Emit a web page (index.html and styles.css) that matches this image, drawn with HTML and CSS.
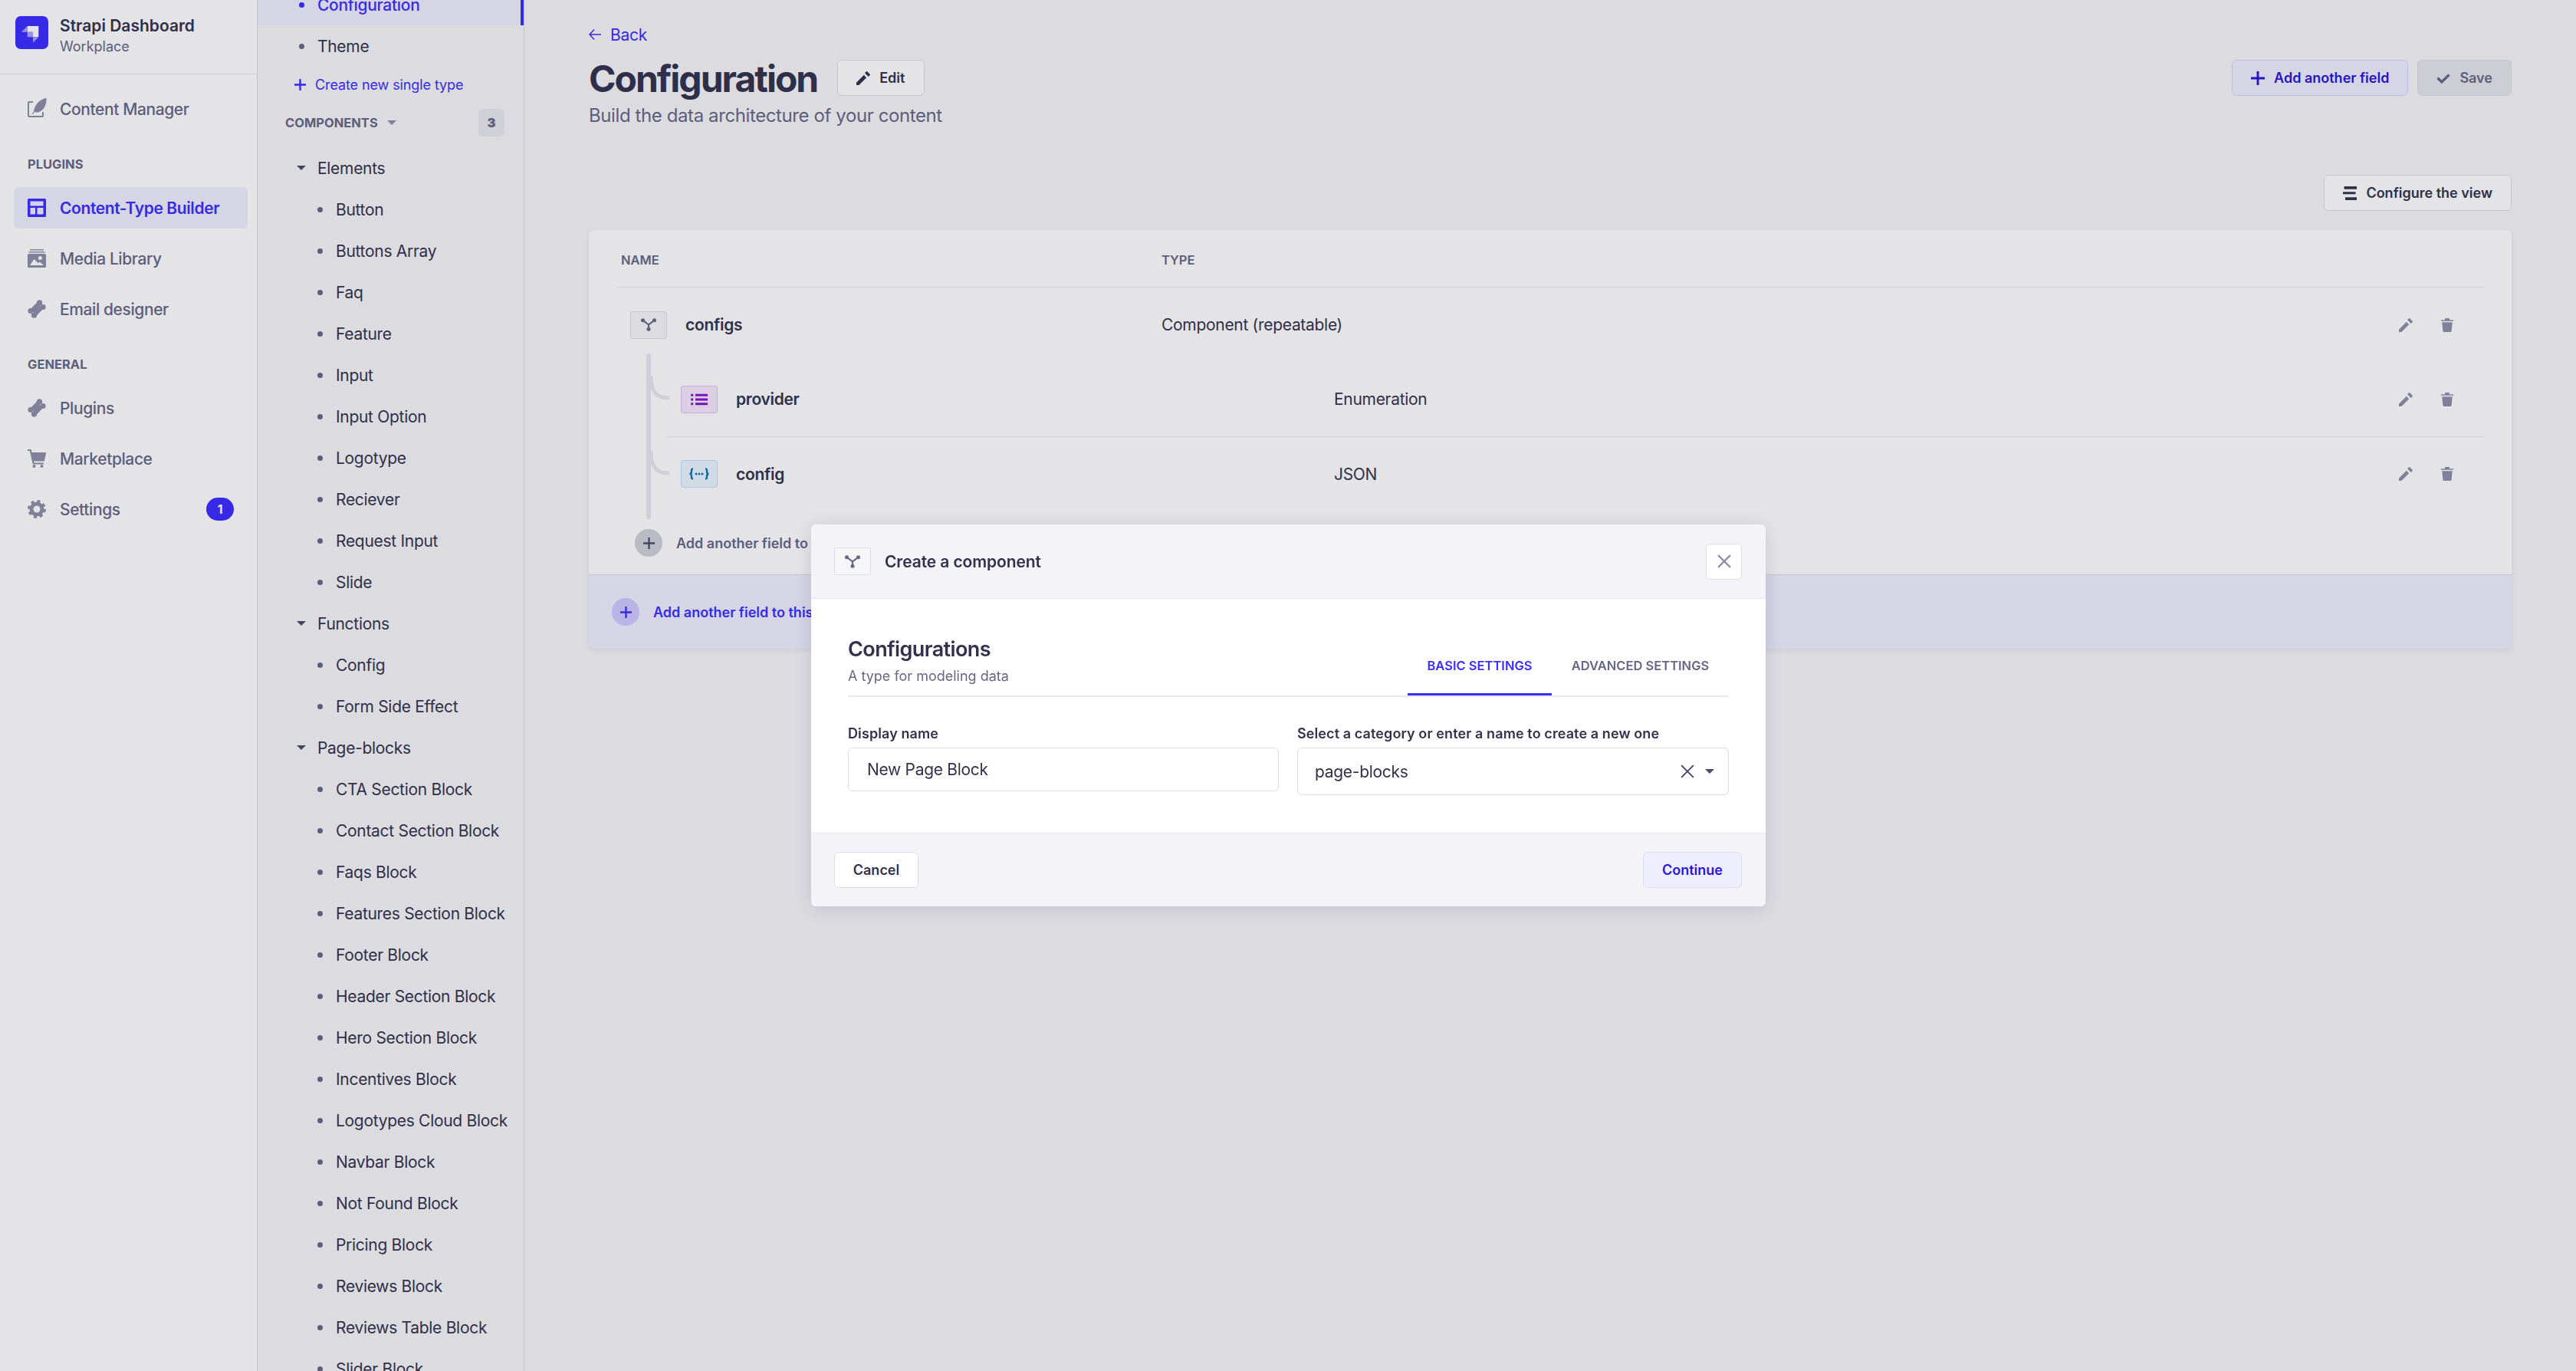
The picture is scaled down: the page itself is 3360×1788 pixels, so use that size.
FILE: index.html
```html
<!DOCTYPE html>
<html lang="en">
<head>
    <meta charset="UTF-8">
    <meta name="viewport" content="width=device-width, initial-scale=1.0">
    <title>Strapi Dashboard</title>
    <link rel="stylesheet" href="styles.css">
</head>
<body>
    <svg class="defs" width="0" height="0">
        <defs>
            <symbol id="i-plus" viewBox="0 0 24 24"><path d="M24 13.6a.3.3 0 0 1-.3.3h-9.8v9.8a.3.3 0 0 1-.3.3h-3.2a.3.3 0 0 1-.3-.3v-9.8H.3a.3.3 0 0 1-.3-.3v-3.2a.3.3 0 0 1 .3-.3h9.8V.3a.3.3 0 0 1 .3-.3h3.2a.3.3 0 0 1 .3.3v9.8h9.8a.3.3 0 0 1 .3.3z"/></symbol>
            <symbol id="i-pencil" viewBox="0 0 24 24"><path d="M0 19.5V24h4.5L17.6 10.9l-4.5-4.5L0 19.5zM23.6 5l-4.6-4.6a1.2 1.2 0 0 0-1.7 0l-2.6 2.6 6.3 6.3 2.6-2.6a1.2 1.2 0 0 0 0-1.7z"/></symbol>
            <symbol id="i-trash" viewBox="1 0 22 24"><path d="M3 7h18l-1.6 15.6a1.5 1.5 0 0 1-1.5 1.4H6.1a1.5 1.5 0 0 1-1.5-1.4L3 7zM1.5 3H8V1.2C8 .5 8.5 0 9.2 0h5.6c.7 0 1.2.5 1.2 1.2V3h6.5c.3 0 .5.2.5.5v1c0 .3-.2.5-.5.5h-21a.5.5 0 0 1-.5-.5v-1c0-.3.2-.5.5-.5z"/></symbol>
            <symbol id="i-comp" viewBox="0 0 24 20"><path d="M3 3l9 7 9-7M12 10v7" fill="none" stroke="currentColor" stroke-width="2.6"/><circle cx="3" cy="3" r="3"/><circle cx="21" cy="3" r="3"/><circle cx="12" cy="17" r="3"/></symbol>
            <symbol id="i-puzzle" viewBox="0 0 24 24"><rect x="6.2" y="6.200" width="11.600" height="11.600" rx="1.500" transform="rotate(45 12 12)"/><circle cx="15.500" cy="4" r="3.700"/><circle cx="20.200" cy="9.500" r="3.400"/><circle cx="8.500" cy="20" r="3.700"/><circle cx="3.800" cy="14.500" r="3.400"/></symbol>
        </defs>
    </svg>

    <aside class="sidebar">
        <div class="brand">
            <svg class="brand-logo" viewBox="0 0 43 43">
                <rect width="43" height="43" rx="7" fill="#3b2cff"/>
                <path d="M15.7 13H30.3V27.3H23V20.7H15.7z" fill="#fff"/>
                <path d="M15.7 20.7H23V27.3H15.7z" fill="#a9a3ff"/>
                <path d="M8 20.7 15.7 13V20.7zM23 27.3H30.3L23 34.7z" fill="#a9a3ff"/>
            </svg>
            <div>
                <div class="brand-name">Strapi Dashboard</div>
                <div class="brand-sub">Workplace</div>
            </div>
        </div>
        <nav class="nav">
            <a class="nav-item">
                <svg class="nav-icon" viewBox="0 0 24 24"><path d="M7 3H2a1 1 0 0 0-1 1v17a1 1 0 0 0 1 1h17a1 1 0 0 0 1-1v-5" fill="none" stroke="currentColor" stroke-width="2"/><path d="M5.500 18.500 8 15.500C9 7 15 0 24.500-2.500 25 6 22 12 17 15c-3 1.700-5.500 2-8 1l-2 3z"/></svg>
                <span>Content Manager</span>
            </a>
            <div class="nav-heading nav-heading-plugins">PLUGINS</div>
            <a class="nav-item is-active">
                <svg class="nav-icon" viewBox="0 0 24 24"><path fill-rule="evenodd" d="M1.500 0h21A1.500 1.500 0 0 1 24 1.500v21a1.500 1.500 0 0 1-1.500 1.500h-21A1.500 1.500 0 0 1 0 22.500v-21A1.500 1.500 0 0 1 1.500 0zM3.500 3.500v6h17v-6zM3.500 12v8.500h6.500V12zM12.500 12v8.500h8V12z"/></svg>
                <span>Content-Type Builder</span>
            </a>
            <a class="nav-item">
                <svg class="nav-icon" viewBox="0 0 24 24"><path fill-rule="evenodd" d="M3 0h18v1.500H3zM1.500 3h21v1.500h-21zM1.500 6h21A1.500 1.500 0 0 1 24 7.500v15a1.500 1.500 0 0 1-1.500 1.500h-21A1.500 1.500 0 0 1 0 22.500v-15A1.500 1.500 0 0 1 1.500 6zM16.500 9a2.500 2.500 0 1 0 0 5 2.500 2.500 0 0 0 0-5zM3 21h18l-5-4.500-2.500 1.500-5-5z"/></svg>
                <span>Media Library</span>
            </a>
            <a class="nav-item">
                <svg class="nav-icon"><use href="#i-puzzle"/></svg>
                <span>Email designer</span>
            </a>
            <div class="nav-heading nav-heading-general">GENERAL</div>
            <a class="nav-item">
                <svg class="nav-icon"><use href="#i-puzzle"/></svg>
                <span>Plugins</span>
            </a>
            <a class="nav-item">
                <svg class="nav-icon" viewBox="0 0 24 24"><path d="M0 0h3.600c.6 0 1 .3 1.200.9L5.500 4H23c.7 0 1.100.6 1 1.200l-2 9.300c-.1.500-.6.900-1.100.9H8l.4 2H21v2.100H6.700L2.900 2.100H0z"/><circle cx="8.500" cy="22" r="2"/><circle cx="18.500" cy="22" r="2"/></svg>
                <span>Marketplace</span>
            </a>
            <a class="nav-item">
                <svg class="nav-icon" viewBox="0 0 24 24"><circle cx="12" cy="12" r="7" fill="none" stroke="currentColor" stroke-width="5"/><circle cx="12" cy="12" r="10.300" fill="none" stroke="currentColor" stroke-width="3.400" stroke-dasharray="4.100 4"/></svg>
                <span>Settings</span>
                <b class="nav-badge">1</b>
            </a>
        </nav>
    </aside>

    <aside class="subnav">
        <ul class="tree">
            <li class="tree-row is-current"><i class="dot"></i>Configuration</li>
            <li class="tree-row"><i class="dot"></i>Theme</li>
        </ul>
        <a class="create-link"><svg class="create-plus"><use href="#i-plus"/></svg>Create new single type</a>
        <div class="sub-heading">
            <span>COMPONENTS</span>
            <i class="caret"></i>
            <b class="count">3</b>
        </div>
        <ul class="tree">
            <li class="tree-row is-group"><i class="caret caret-dark"></i>Elements</li>
            <li class="tree-row is-child"><i class="dot"></i>Button</li>
            <li class="tree-row is-child"><i class="dot"></i>Buttons Array</li>
            <li class="tree-row is-child"><i class="dot"></i>Faq</li>
            <li class="tree-row is-child"><i class="dot"></i>Feature</li>
            <li class="tree-row is-child"><i class="dot"></i>Input</li>
            <li class="tree-row is-child"><i class="dot"></i>Input Option</li>
            <li class="tree-row is-child"><i class="dot"></i>Logotype</li>
            <li class="tree-row is-child"><i class="dot"></i>Reciever</li>
            <li class="tree-row is-child"><i class="dot"></i>Request Input</li>
            <li class="tree-row is-child"><i class="dot"></i>Slide</li>
            <li class="tree-row is-group"><i class="caret caret-dark"></i>Functions</li>
            <li class="tree-row is-child"><i class="dot"></i>Config</li>
            <li class="tree-row is-child"><i class="dot"></i>Form Side Effect</li>
            <li class="tree-row is-group"><i class="caret caret-dark"></i>Page-blocks</li>
            <li class="tree-row is-child"><i class="dot"></i>CTA Section Block</li>
            <li class="tree-row is-child"><i class="dot"></i>Contact Section Block</li>
            <li class="tree-row is-child"><i class="dot"></i>Faqs Block</li>
            <li class="tree-row is-child"><i class="dot"></i>Features Section Block</li>
            <li class="tree-row is-child"><i class="dot"></i>Footer Block</li>
            <li class="tree-row is-child"><i class="dot"></i>Header Section Block</li>
            <li class="tree-row is-child"><i class="dot"></i>Hero Section Block</li>
            <li class="tree-row is-child"><i class="dot"></i>Incentives Block</li>
            <li class="tree-row is-child"><i class="dot"></i>Logotypes Cloud Block</li>
            <li class="tree-row is-child"><i class="dot"></i>Navbar Block</li>
            <li class="tree-row is-child"><i class="dot"></i>Not Found Block</li>
            <li class="tree-row is-child"><i class="dot"></i>Pricing Block</li>
            <li class="tree-row is-child"><i class="dot"></i>Reviews Block</li>
            <li class="tree-row is-child"><i class="dot"></i>Reviews Table Block</li>
            <li class="tree-row is-child"><i class="dot"></i>Slider Block</li>
        </ul>
    </aside>

    <main class="main">
        <a class="back">
            <svg class="back-arrow" viewBox="0 0 16 16"><path d="M7 1.500 1 8l6 6.500M1.300 8H16" fill="none" stroke="currentColor" stroke-width="1.500"/></svg>
            Back
        </a>
        <div class="page-head">
            <div class="title-line">
                <h1>Configuration</h1>
                <button class="btn btn-edit"><svg class="btn-icon"><use href="#i-pencil"/></svg>Edit</button>
            </div>
            <div class="head-actions">
                <button class="btn btn-add"><svg class="btn-icon"><use href="#i-plus"/></svg>Add another field</button>
                <button class="btn btn-save">
                    <svg class="btn-icon" viewBox="0 0 24 24"><path d="M2 11.500 9 18.500 22 6" fill="none" stroke="currentColor" stroke-width="4.500"/></svg>
                    Save
                </button>
            </div>
        </div>
        <p class="subtitle">Build the data architecture of your content</p>
        <div class="view-bar">
            <button class="btn btn-view">
                <svg class="btn-icon" viewBox="0 0 24 24"><path d="M2 0h22v5H2zM0 9.500h22v4H0zM4 19h20v5H4z"/></svg>
                Configure the view
            </button>
        </div>

        <section class="panel">
            <div class="panel-body">
                <div class="col-head">
                    <span class="col-name">NAME</span>
                    <span>TYPE</span>
                </div>
                <div class="field">
                    <span class="type-box"><svg class="type-icon"><use href="#i-comp"/></svg></span>
                    <span class="field-name">configs</span>
                    <span class="field-type">Component (repeatable)</span>
                    <span class="field-actions">
                        <svg class="act"><use href="#i-pencil"/></svg>
                        <svg class="act"><use href="#i-trash"/></svg>
                    </span>
                </div>
                <div class="nested">
                    <div class="nested-line"></div>
                    <div class="field field-sub">
                        <svg class="curve" viewBox="0 0 28 36"><path d="M3 0c0 16 4 29 22 29" fill="none" stroke="#e7e7ee" stroke-width="5" stroke-linecap="round"/></svg>
                        <span class="type-box type-enum">
                            <svg class="type-icon" viewBox="0 0 22 16"><path d="M6 .8h16v3H6zM6 6.500h16v3H6zM6 12.200h16v3H6z"/><circle cx="1.700" cy="2.300" r="1.700"/><circle cx="1.700" cy="8" r="1.700"/><circle cx="1.700" cy="13.700" r="1.700"/></svg>
                        </span>
                        <span class="field-name">provider</span>
                        <span class="field-type">Enumeration</span>
                        <span class="field-actions">
                            <svg class="act"><use href="#i-pencil"/></svg>
                            <svg class="act"><use href="#i-trash"/></svg>
                        </span>
                    </div>
                    <div class="field field-sub">
                        <svg class="curve" viewBox="0 0 28 36"><path d="M3 0c0 16 4 29 22 29" fill="none" stroke="#e7e7ee" stroke-width="5" stroke-linecap="round"/></svg>
                        <span class="type-box type-json">
                            <svg class="type-icon" viewBox="0 0 28 16"><path d="M6 1.500C3.500 1.500 4 3 4 5S3.500 8 1.500 8C3.500 8 4 9 4 11s-.5 3.500 2 3.500M22 1.500c2.500 0 2 1.500 2 3.500s.5 3 2.500 3c-2 0-2.500 1-2.500 3s.5 3.500-2 3.500" fill="none" stroke="currentColor" stroke-width="2.400"/><circle cx="10" cy="8" r="1.500"/><circle cx="14" cy="8" r="1.500"/><circle cx="18" cy="8" r="1.500"/></svg>
                        </span>
                        <span class="field-name">config</span>
                        <span class="field-type">JSON</span>
                        <span class="field-actions">
                            <svg class="act"><use href="#i-pencil"/></svg>
                            <svg class="act"><use href="#i-trash"/></svg>
                        </span>
                    </div>
                </div>
                <a class="add-nested">
                    <span class="add-circle"><svg class="add-plus"><use href="#i-plus"/></svg></span>
                    Add another field to this component
                </a>
            </div>
            <a class="panel-foot">
                <span class="add-circle add-circle-blue"><svg class="add-plus"><use href="#i-plus"/></svg></span>
                Add another field to this single type
            </a>
        </section>
    </main>

    <div class="overlay"></div>

    <div class="modal">
        <header class="modal-head">
            <span class="type-box type-modal"><svg class="type-icon"><use href="#i-comp"/></svg></span>
            <span class="modal-title">Create a component</span>
            <button class="close-btn">
                <svg viewBox="0 0 16 16" class="close-x"><path d="M1 1l14 14M15 1 1 15" fill="none" stroke="currentColor" stroke-width="2"/></svg>
            </button>
        </header>
        <div class="modal-body">
            <div class="tabs-line">
                <div>
                    <h2>Configurations</h2>
                    <p>A type for modeling data</p>
                </div>
                <div class="tabs">
                    <span class="tab is-selected">BASIC SETTINGS</span>
                    <span class="tab">ADVANCED SETTINGS</span>
                </div>
            </div>
            <div class="form-grid">
                <div>
                    <label class="form-label">Display name</label>
                    <div class="text-input">New Page Block</div>
                </div>
                <div>
                    <label class="form-label">Select a category or enter a name to create a new one</label>
                    <div class="text-input select-input">
                        <span>page-blocks</span>
                        <svg viewBox="0 0 16 16" class="clear-x"><path d="M1 1l14 14M15 1 1 15" fill="none" stroke="currentColor" stroke-width="1.800"/></svg>
                        <i class="caret caret-select"></i>
                    </div>
                </div>
            </div>
        </div>
        <footer class="modal-foot">
            <button class="btn btn-cancel">Cancel</button>
            <button class="btn btn-continue">Continue</button>
        </footer>
    </div>
</body>
</html>
```

FILE: styles.css
```css
* {
    box-sizing: border-box;
}
html, body {
    height: 100%;
}
body {
    margin: 0;
    display: flex;
    overflow: hidden;
    font-family: Inter, "Noto Sans", sans-serif;
    font-size: 21px;
    letter-spacing: -0.3px;
    color: #32324d;
    background-color: #f6f6f9;
}
a {
    display: block;
}
ul {
    list-style: none;
    margin: 0;
    padding: 0;
}
svg {
    fill: currentColor;
    flex: none;
}
.defs {
    position: absolute;
}

/* left menu */
.sidebar {
    width: 336px;
    flex: none;
    background-color: #fff;
    border-right: 1px solid #dcdce4;
}
.brand {
    height: 97px;
    padding: 21px 0 0 20px;
    display: flex;
    gap: 15px;
    border-bottom: 1px solid #e6e6ec;
}
.brand-logo {
    width: 43px;
    height: 43px;
}
.brand-name {
    font-weight: 600;
    line-height: 26px;
    letter-spacing: 0;
    color: #32324d;
}
.brand-sub {
    font-size: 18px;
    line-height: 24px;
    margin-top: 2px;
    letter-spacing: 0;
    color: #666687;
}
.nav {
    padding: 18px 12px 0 18px;
}
.nav-item {
    height: 54px;
    margin-bottom: 12px;
    padding: 0 18px;
    border-radius: 6px;
    display: flex;
    align-items: center;
    gap: 18px;
    color: #666687;
    font-weight: 500;
    letter-spacing: -0.4px;
}
.nav-icon {
    width: 24px;
    height: 24px;
    overflow: visible;
    color: #8e8ea9;
}
.nav-item.is-active {
    background-color: #eeeeff;
    color: #3b2cff;
    font-weight: 600;
}
.nav-item.is-active .nav-icon {
    color: #3b2cff;
}
.nav-heading {
    font-size: 16.5px;
    font-weight: 700;
    line-height: 20px;
    padding-left: 18px;
    letter-spacing: 0;
    color: #666687;
}
.nav-heading-plugins,
.nav-heading-general {
    margin: 35px 0 20px;
}
.nav-badge {
    margin-left: auto;
    width: 36px;
    height: 30px;
    border-radius: 15px;
    background-color: #3b2cff;
    color: #fff;
    font-size: 16.5px;
    font-weight: 700;
    text-align: center;
    line-height: 30px;
    letter-spacing: 0;
}

/* second column */
.subnav {
    width: 348px;
    flex: none;
    margin-top: -21px;
    background-color: #f6f6f9;
    border-right: 1px solid #dcdce4;
}
.tree-row {
    height: 54px;
    padding-left: 78px;
    display: flex;
    align-items: center;
    position: relative;
    color: #32324d;
    white-space: nowrap;
}
.is-group {
    padding-left: 51px;
    gap: 15px;
}
.is-child {
    padding-left: 102px;
}
.dot {
    position: absolute;
    left: 54px;
    width: 7px;
    height: 7px;
    border-radius: 50%;
    background-color: #666687;
}
.is-child .dot {
    left: 78px;
}
.is-current {
    background-color: #eeeeff;
    border-right: 4px solid #3b2cff;
    color: #3b2cff;
    font-weight: 500;
}
.is-current .dot {
    background-color: #3b2cff;
}
.create-link {
    height: 36px;
    margin-top: 5px;
    padding-left: 48px;
    display: flex;
    align-items: center;
    gap: 12px;
    color: #3b2cff;
    font-size: 18px;
    letter-spacing: -0.1px;
    white-space: nowrap;
}
.create-plus {
    width: 15px;
    height: 15px;
}
.sub-heading {
    height: 36px;
    margin-top: 14px;
    margin-bottom: 14px;
    padding: 0 25px 0 36px;
    display: flex;
    align-items: center;
    color: #666687;
    font-size: 16.5px;
    font-weight: 700;
    letter-spacing: 0;
}
.caret {
    width: 0;
    height: 0;
    border-left: 6px solid transparent;
    border-right: 6px solid transparent;
    border-top: 6px solid #8e8ea9;
}
.sub-heading .caret {
    margin-left: 12px;
}
.caret-dark {
    border-top-color: #4a4a6a;
}
.count {
    margin-left: auto;
    width: 34px;
    height: 36px;
    border-radius: 6px;
    background-color: #e7e7ee;
    text-align: center;
    line-height: 36px;
}

/* main area */
.main {
    flex: 1;
    min-width: 0;
    padding: 30px 84px 0;
}
.back {
    height: 30px;
    display: flex;
    align-items: center;
    gap: 12px;
    color: #3b2cff;
}
.back-arrow {
    width: 16px;
    height: 16px;
}
.page-head {
    margin-top: 13px;
    display: flex;
    justify-content: space-between;
}
.title-line {
    display: flex;
    align-items: center;
    gap: 26px;
}
h1 {
    margin: 0;
    font-size: 48px;
    font-weight: 700;
    line-height: 60px;
    letter-spacing: -2px;
    color: #32324d;
}
.head-actions {
    display: flex;
    gap: 12px;
    margin-top: 5px;
}
.btn {
    height: 47px;
    padding: 0 24px;
    border: 1px solid #dcdce4;
    border-radius: 6px;
    background-color: #fff;
    color: #32324d;
    font-family: inherit;
    font-size: 18px;
    font-weight: 600;
    display: flex;
    align-items: center;
    gap: 12px;
    white-space: nowrap;
}
.btn-icon {
    width: 18px;
    height: 18px;
}
.btn-edit {
    width: 114px;
    margin-top: -3px;
}
.btn-add {
    background-color: #eeeeff;
    border-color: #d4d2ff;
    color: #2712d8;
}
.btn-save {
    background-color: #e5e5ec;
    border-color: #dcdce4;
    color: #666687;
}
.subtitle {
    margin: 3px 0 0;
    font-size: 24px;
    line-height: 30px;
    letter-spacing: -0.4px;
    color: #666687;
}
.view-bar {
    margin-top: 62px;
    display: flex;
    justify-content: flex-end;
}
.panel {
    margin-top: 25px;
    border-radius: 6px;
    background-color: #fff;
    box-shadow: 0 2px 6px rgba(33, 33, 52, 0.1);
    overflow: hidden;
}
.panel-body {
    padding: 0 36px;
    height: 449px;
}
.col-head {
    height: 75px;
    padding: 3px 0 0 6px;
    display: flex;
    align-items: center;
    border-bottom: 1px solid #eaeaef;
    font-size: 16.5px;
    font-weight: 600;
    letter-spacing: 0;
    color: #666687;
}
.col-name {
    width: 705px;
}
.field {
    height: 97px;
    padding-left: 18px;
    display: flex;
    align-items: center;
    position: relative;
}
.type-box {
    width: 48px;
    height: 36px;
    flex: none;
    border: 1px solid #dcdce4;
    border-radius: 3px;
    background-color: #f6f6f9;
    display: flex;
    align-items: center;
    justify-content: center;
    color: #666687;
}
.type-icon {
    width: 20px;
    height: 17px;
}
.type-enum {
    background-color: #f6e8fc;
    border-color: #e0c1f4;
    color: #8312d1;
}
.type-enum .type-icon {
    width: 22px;
    height: 16px;
}
.type-json {
    background-color: #eaf5ff;
    border-color: #b8e1ff;
    color: #0c75af;
}
.type-json .type-icon {
    width: 28px;
    height: 16px;
}
.field-name {
    width: 645px;
    padding-left: 24px;
    flex: none;
    font-weight: 600;
}
.field-type {
    flex: 1;
}
.field-actions {
    display: flex;
    gap: 36px;
    margin-right: 39px;
    color: #8e8ea9;
}
.act {
    width: 18px;
    height: 18px;
}
.nested {
    position: relative;
}
.nested-line {
    position: absolute;
    left: 39px;
    top: -11px;
    width: 6px;
    height: 216px;
    border-radius: 3px;
    background-color: #e7e7ee;
}
.field-sub {
    margin-left: 66px;
    padding-left: 18px;
}
.field-sub .field-name {
    width: 804px;
}
.field-sub + .field-sub {
    border-top: 1px solid #eaeaef;
}
.curve {
    position: absolute;
    left: -24px;
    top: 18px;
    width: 28px;
    height: 36px;
}
.add-nested {
    display: flex;
    align-items: center;
    gap: 18px;
    margin: 24px 0 0 24px;
    height: 36px;
    color: #666687;
    font-size: 18px;
    font-weight: 600;
    letter-spacing: 0;
    white-space: nowrap;
}
.add-circle {
    width: 36px;
    height: 36px;
    border-radius: 50%;
    flex: none;
    background-color: #d0d0da;
    display: flex;
    align-items: center;
    justify-content: center;
    color: #4a4a6a;
}
.add-circle-blue {
    background-color: #cec8ff;
    color: #3b2cff;
}
.add-plus {
    width: 15px;
    height: 15px;
}
.panel-foot {
    height: 97px;
    padding-left: 30px;
    display: flex;
    align-items: center;
    gap: 18px;
    background-color: #eeeeff;
    border-top: 1px solid #dcdce4;
    color: #3b2cff;
    font-size: 18px;
    font-weight: 600;
    letter-spacing: 0;
}

/* modal */
.overlay {
    position: fixed;
    inset: 0;
    background-color: rgba(33, 33, 52, 0.12);
}
.modal {
    position: fixed;
    left: 1058px;
    top: 684px;
    width: 1245px;
    height: 498px;
    border-radius: 6px;
    overflow: hidden;
    background-color: #fff;
    box-shadow: 0 3px 22px rgba(33, 33, 52, 0.14);
}
.modal-head {
    height: 97px;
    padding: 0 31px 0 30px;
    display: flex;
    align-items: center;
    background-color: #f3f3f8;
    border-bottom: 1px solid #e8e8ee;
}
.modal-title {
    margin-left: 18px;
    font-weight: 600;
    letter-spacing: -0.1px;
}
.close-btn {
    margin-left: auto;
    width: 47px;
    height: 47px;
    padding: 0;
    border: 1px solid #dcdce4;
    border-radius: 6px;
    background-color: #fff;
    display: flex;
    align-items: center;
    justify-content: center;
    color: #8e8ea9;
}
.close-x {
    width: 18px;
    height: 18px;
}
.modal-body {
    height: 305px;
    padding: 49px 48px 0;
}
.tabs-line {
    height: 79px;
    display: flex;
    justify-content: space-between;
    border-bottom: 2px solid #eaeaef;
}
h2 {
    margin: 0;
    font-size: 27px;
    font-weight: 600;
    line-height: 34px;
    letter-spacing: -0.6px;
}
.tabs-line p {
    margin: 6px 0 0;
    font-size: 18px;
    line-height: 24px;
    letter-spacing: 0;
    color: #666687;
}
.tabs {
    display: flex;
}
.tab {
    height: 77px;
    width: 231px;
    padding-top: 28px;
    font-size: 16.5px;
    font-weight: 600;
    line-height: 20px;
    letter-spacing: 0;
    text-align: center;
    color: #666687;
    white-space: nowrap;
}
.tab.is-selected {
    width: 188px;
    color: #3b2cff;
    border-bottom: 3px solid #3b2cff;
}
.form-grid {
    display: grid;
    grid-template-columns: 562px 563px;
    gap: 24px;
    margin-top: 36px;
}
.form-label {
    display: block;
    font-size: 18px;
    font-weight: 600;
    line-height: 24px;
    letter-spacing: 0.1px;
    margin-bottom: 6px;
}
.text-input {
    height: 57px;
    padding: 0 24px;
    border: 1px solid #dcdce4;
    border-radius: 6px;
    display: flex;
    align-items: center;
}
.select-input {
    height: 62px;
    padding: 0 18px 0 22px;
}
.select-input span {
    flex: 1;
}
.clear-x {
    width: 18px;
    height: 18px;
    color: #4a4a6a;
}
.caret-select {
    margin-left: 14px;
    border-top-color: #4a4a6a;
}
.modal-foot {
    height: 96px;
    padding: 0 31px 0 30px;
    display: flex;
    align-items: center;
    justify-content: space-between;
    background-color: #f3f3f8;
    border-top: 1px solid #e8e8ee;
}
.btn-cancel {
    width: 110px;
    justify-content: center;
    padding: 0;
}
.btn-continue {
    width: 129px;
    justify-content: center;
    padding: 0;
    background-color: #eeeeff;
    border-color: #d9d8ff;
    color: #2a14e0;
}
```
